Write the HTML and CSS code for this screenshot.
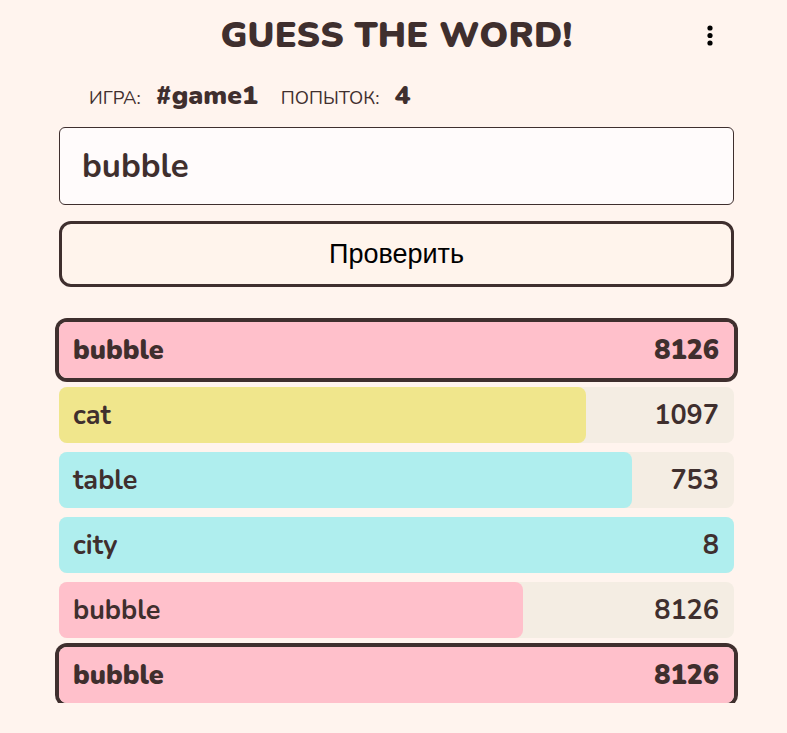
FILE: index.html
```html
<!DOCTYPE html>
<html lang="ru">
<head>
<meta charset="utf-8">
<title>Guess the word</title>
<link rel="stylesheet" href="styles.css">
</head>
<body>
<div class="app">
  <header class="header">
    <h1 class="title">GUESS THE WORD!</h1>
    <button class="menu" aria-label="menu">
      <svg width="8" height="24" viewBox="0 0 8 24"><circle cx="4" cy="4" r="2.6"/><circle cx="4" cy="11.5" r="2.6"/><circle cx="4" cy="19" r="2.6"/></svg>
    </button>
  </header>
  <div class="info">
    <span class="label">ИГРА:</span><span class="value">#game1</span>
    <span class="label">ПОПЫТОК:</span><span class="value">4</span>
  </div>
  <div class="input">bubble</div>
  <button class="check">Проверить</button>
  <ul class="list">
    <li class="row current"><div class="fill pink" style="width:100%"></div><span class="word">bubble</span><span class="num">8126</span></li>
    <li class="row"><div class="fill yellow" style="width:78.1%"></div><span class="word">cat</span><span class="num">1097</span></li>
    <li class="row"><div class="fill cyan" style="width:84.9%"></div><span class="word">table</span><span class="num">753</span></li>
    <li class="row"><div class="fill cyan" style="width:100%"></div><span class="word">city</span><span class="num">8</span></li>
    <li class="row"><div class="fill pink" style="width:68.7%"></div><span class="word">bubble</span><span class="num">8126</span></li>
    <li class="row current"><div class="fill pink" style="width:100%"></div><span class="word">bubble</span><span class="num">8126</span></li>
  </ul>
</div>
</body>
</html>
```
FILE: styles.css
```css
* { box-sizing: border-box; }
html, body { margin: 0; padding: 0; }
body {
  background: #fff4ee;
  color: #3f2f2e;
  font-family: "Nunito", "Lato", "Noto Sans", sans-serif;
}
.app {
  width: 675px;
  margin-left: 59px;
  padding-top: 14px;
}
.header {
  position: relative;
  display: flex;
  justify-content: center;
  align-items: center;
  height: 44px;
}
.title {
  margin: 0;
  font-size: 36px;
  font-weight: 900;
  letter-spacing: 0.2px;
  line-height: 44px;
}
.menu {
  position: absolute;
  right: 20px;
  top: 10px;
  background: none;
  border: 0;
  padding: 0;
  display: flex;
  fill: #000;
}
.info {
  display: flex;
  align-items: baseline;
  margin-top: 19px;
  padding-left: 30px;
  height: 30px;
}
.label {
  font-size: 18.5px;
  margin-right: 15px;
}
.value {
  font-size: 26.5px;
  font-weight: 900;
  margin-right: 23px;
}
.input {
  margin-top: 20px;
  height: 78px;
  background: #fffbfb;
  border: 1px solid #3f2f2e;
  border-radius: 6px;
  padding-left: 22px;
  display: flex;
  align-items: center;
  font-size: 33px;
  font-weight: 700;
}
.check {
  display: block;
  width: 100%;
  margin-top: 16px;
  height: 66px;
  background: #fff4ec;
  border: 3px solid #3f2f2e;
  border-radius: 12px;
  font-family: "Liberation Sans", Arial, sans-serif;
  font-size: 27px;
  color: #000;
}
.list {
  list-style: none;
  margin: 35px 0 0;
  padding: 0;
  display: flex;
  flex-direction: column;
  gap: 9px;
}
.row {
  position: relative;
  height: 56px;
  background: #f4ede3;
  border-radius: 8px;
  display: flex;
  align-items: center;
  justify-content: space-between;
  padding: 0 15px 0 14px;
  font-size: 27px;
  font-weight: 700;
}
.row.current {
  font-weight: 900;
  box-shadow: 0 0 0 4px #3f2f2e;
}
.fill {
  position: absolute;
  left: 0; top: 0; bottom: 0;
  border-radius: 8px;
}
.pink { background: #ffc0cb; }
.yellow { background: #f0e68c; }
.cyan { background: #afeeee; }
.word, .num { position: relative; }
```
